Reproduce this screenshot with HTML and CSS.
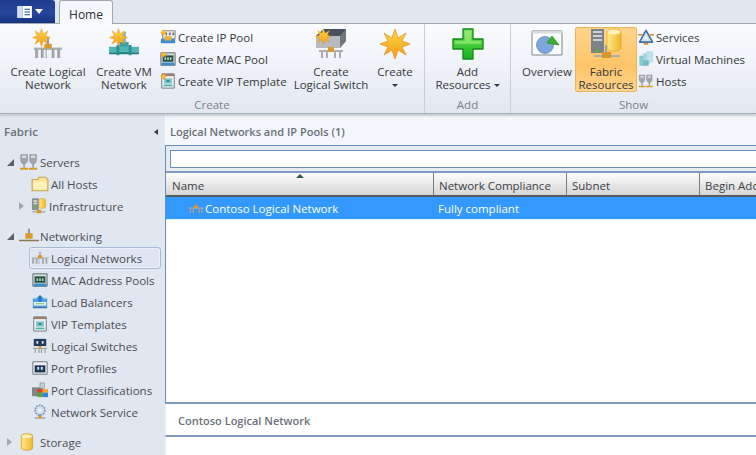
FILE: index.html
```html
<!DOCTYPE html>
<html lang="en">
<head>
<meta charset="utf-8">
<title>Fabric</title>
<link rel="stylesheet" href="styles.css">
</head>
<body>
<svg class="defs" width="0" height="0" aria-hidden="true">
  <defs>
    <linearGradient id="sun" x1="0" y1="0" x2="0" y2="1"><stop offset="0" stop-color="#ffd84a"/><stop offset="1" stop-color="#f59a16"/></linearGradient>
    <linearGradient id="cylfill" x1="0" y1="0" x2="1" y2="0"><stop offset="0" stop-color="#ffe88a"/><stop offset="1" stop-color="#f0b82c"/></linearGradient>
    <linearGradient id="grn" x1="0" y1="0" x2="0" y2="1"><stop offset="0" stop-color="#7fe85a"/><stop offset="1" stop-color="#12b01c"/></linearGradient>
    <symbol id="star" viewBox="0 0 32 32"><polygon points="16,1 19,10 27,5 23,13 31,16 23,19 27,27 19,22 16,31 13,22 5,27 9,19 1,16 9,13 5,5 13,10" fill="url(#sun)" stroke="#e8941a" stroke-width=".8"/></symbol>
    <symbol id="net" viewBox="0 0 32 22"><path d="M15 0h2v8h-2z" fill="#8a8f95"/><path d="M1 10h30v2.500H1z" fill="#a9adb0"/><path d="M3 12h2.500v9H3zM9 12h2.500v9H9zM20.500 12H23v9h-2.500zM26.500 12H29v9h-2.500z" fill="#a9adb0"/><path d="M3 12v9M9 12v9M14 12v9h1M20.500 12v9M26.500 12v9" stroke="#6e7276" fill="none" stroke-width=".7"/><path d="M12 6h8v5h-8z" fill="#d99a2a"/></symbol>
    <symbol id="pipe" viewBox="0 0 32 32"><path d="M14 4h4v12h-4z" fill="#7dbcc0"/><path d="M11 15h10v12H11z" fill="#3aa3a5"/><path d="M0 20h32v6H0z" fill="#4fb6b4"/><path d="M0 26h32v2H0z" fill="#1f7a7c"/><path d="M8 18h3v11H8zM21 18h3v11h-3z" fill="#2a8f92"/></symbol>
    <symbol id="pool" viewBox="0 0 18 18"><path d="M3 2h14v9H3z" fill="#eef1f4" stroke="#75797d"/><path d="M6 4h2v3H6zM10 4h2v3h-2zM14 4h2v3h-2z" fill="#6a7078"/><path d="M1 11h16v5H1z" fill="#3c8ed8"/><path d="M5 8h8v5H5z" fill="#e6ae3a"/></symbol>
    <symbol id="mac" viewBox="0 0 18 18"><path d="M1 2h16v14H1z" fill="#cfd5da" stroke="#5c6268"/><path d="M3 5h12v7H3z" fill="#1d4f3d"/><path d="M5 7h2v3H5zM8 7h2v3H8zM11 7h2v3h-2z" fill="#b5c7b5"/><path d="M2 13h14v3H2z" fill="#3a8fd0"/></symbol>
    <symbol id="lb" viewBox="0 0 18 18"><path d="M1 5h16v9H1z" fill="#4aa3e0"/><path d="M2 9h14v4H2z" fill="#e8f2fa"/><path d="M9 1l4 4h-2.500v4h-3V5H5z" fill="#1e76c4"/><path d="M4 10.500h10v1H4z" fill="#6fb04f"/><path d="M1 14h16v2H1z" fill="#2d78b8"/></symbol>
    <symbol id="vip" viewBox="0 0 18 18"><path d="M2 1h14v16H2z" fill="#f1f2f3" stroke="#6b6f74"/><path d="M2 1h14v2.500H2z" fill="#9d7f72"/><path d="M4.500 6h9v6h-9z" fill="#7fc7c7"/><path d="M7.500 8h3v2h-3z" fill="#1d7f82"/><path d="M4 13h10v2H4z" fill="#4fb6b4"/></symbol>
    <symbol id="sw" viewBox="0 0 18 18"><path d="M2 1h14v8H2z" fill="#223a5a"/><path d="M5 3.500h2v3H5zM11 3.500h2v3h-2z" fill="#e6edf5"/><path d="M1 11h16v1.500H1zM3 12h1.500v5H3zM7 12h1.500v5H7zM10 12h1.500v5H10zM14 12h1.500v5H14z" fill="#a2a6a9"/><path d="M7.500 9h3v2.500h-3z" fill="#d99a2a"/></symbol>
    <symbol id="prof" viewBox="0 0 18 18"><path d="M1 2h16v14H1z" fill="#eef0f2" stroke="#666b70"/><path d="M3 6h12v8H3z" fill="#223a5a"/><path d="M6 8h2v3H6zM10 8h2v3h-2z" fill="#e6edf5"/></symbol>
    <symbol id="cls" viewBox="0 0 18 18"><path d="M0 6h12v10H0z" fill="#82868a"/><path d="M9 1h5v6H9z" fill="#c2d0dc" stroke="#7c8894" stroke-width=".7"/><path d="M6 8h6v4H6z" fill="#e23b2c"/><path d="M12 8h6v4h-6z" fill="#f2a71c"/><path d="M6 12h6v5H6z" fill="#56a83a"/><path d="M12 12h6v5h-6z" fill="#2f86d8"/></symbol>
    <symbol id="svc" viewBox="0 0 18 18"><circle cx="9" cy="7" r="5.500" fill="#cfe0ee" stroke="#8a9db0" stroke-width="2" stroke-dasharray="2 1"/><circle cx="9" cy="7" r="2" fill="#f4f7fa"/><path d="M8 12h2v3H8z" fill="#8a8f95"/><path d="M3 15h12v1.500H3z" fill="#9a9ea2"/><path d="M7 13.500h4v2.500H7z" fill="#d99a2a"/></symbol>
    <symbol id="cylinder" viewBox="0 0 16 22"><path d="M1 4c0-4 14-4 14 0v14c0 4-14 4-14 0z" fill="url(#cylfill)" stroke="#d99a1c"/><ellipse cx="8" cy="4" rx="6" ry="2.200" fill="#fff2b8"/></symbol>
    <symbol id="hosts" viewBox="0 0 24 22"><path d="M2 2h8v8l-2 3h-4l-2-3zM13 2h8v8l-2 3h-4l-2-3z" fill="#a3a8ac" stroke="#7b8084" stroke-width=".7"/><path d="M3.500 3h5v3h-5zM14.500 3h5v3h-5z" fill="#d8dcdf"/><path d="M5 13h2v5H5zM16 13h2v5h-2z" fill="#9a9ea2"/><path d="M1 18h10v2.500H1zM12 18h10v2.500H12z" fill="#d99a2a"/></symbol>
    <symbol id="infra" viewBox="0 0 22 22"><path d="M2 1h8v15H2z" fill="#8d9298" stroke="#5e6368" stroke-width=".7"/><path d="M3.500 3h5v2h-5zM3.500 6.500h5v2h-5z" fill="#dfe2e5"/><circle cx="5" cy="13" r="1.200" fill="#46c22c"/><path d="M11 3c0-3 9-3 9 0v9c0 3-9 3-9 0z" fill="url(#cylfill)" stroke="#d99a1c" stroke-width=".7"/><path d="M2 18h18v2H2z" fill="#a9adb0"/><path d="M8 16h6v5H8z" fill="#d99a2a"/></symbol>
    <symbol id="vm" viewBox="0 0 22 24"><path d="M1 7h9v15H1z" fill="#8ccad2"/><path d="M7 4h9v15H7z" fill="#a7d8de" stroke="#86c0c8" stroke-width=".6"/><path d="M12 1h9v15h-9z" fill="#bfe3e8" stroke="#94cad2" stroke-width=".6"/><path d="M7 14h8v8H7z" fill="#78bcc6"/></symbol>
    <symbol id="services" viewBox="0 0 22 22"><path d="M11 2L20 18H2z" fill="#cfe3f5" stroke="#3e6ea8" stroke-width="2.200" stroke-linejoin="round"/><path d="M11 9l3 5H8z" fill="#fff"/><path d="M0 7h6v1.800H0zM16 7h6v1.800h-6zM8 19h6v2.500H8z" fill="#d9892a"/></symbol>
    <symbol id="nwing" viewBox="0 0 22 18"><path d="M10 1h2v9h-2z" fill="#8a8f95"/><path d="M7 6h8v6H7z" fill="#d99a2a"/><path d="M0 13h22v1.800H0z" fill="#8d7a55"/></symbol>
  </defs>
</svg>

<header class="titlebar">
  <button class="filebtn" type="button" aria-label="File menu">
    <svg class="fileicon" viewBox="0 0 16 13"><path d="M0 0h6v13H0z" fill="#cfe0f5"/><path d="M6 0h10v13H6z" fill="#fff"/><path d="M8 3h6v1H8zM8 6h6v1H8zM8 9h6v1H8z" fill="#1d4f9c"/></svg>
    <span class="filearrow"></span>
  </button>
  <div class="tab">Home</div>
</header>

<section class="ribbon">
  <div class="group group-create">
    <div class="group-items">
      <div class="big w-cln">
        <span class="bigicon"><svg class="ic-stacked" viewBox="0 0 32 32"><use href="#star" x="0" y="0" width="19" height="19"/><use href="#net" x="1" y="10" width="30" height="21"/></svg></span>
        <span class="biglabel">Create Logical<br>Network</span>
      </div>
      <div class="big w-cvm">
        <span class="bigicon"><svg class="ic-stacked" viewBox="0 0 32 32"><use href="#pipe" x="0" y="0" width="32" height="30"/><use href="#star" x="1" y="0" width="19" height="19"/></svg></span>
        <span class="biglabel">Create VM<br>Network</span>
      </div>
      <ul class="smalls">
        <li><svg class="sic" viewBox="0 0 18 18"><use href="#pool" width="18" height="18"/><use href="#star" width="8" height="8"/></svg>Create IP Pool</li>
        <li><svg class="sic" viewBox="0 0 18 18"><use href="#mac" width="18" height="18"/><use href="#star" width="8" height="8"/></svg>Create MAC Pool</li>
        <li><svg class="sic" viewBox="0 0 18 18"><use href="#vip" width="18" height="18"/><use href="#star" width="8" height="8"/></svg>Create VIP Template</li>
      </ul>
      <div class="big w-cls">
        <span class="bigicon"><svg class="ic-stacked" viewBox="0 0 32 32"><path d="M1 8L9 1h22v12l-6 7H1z" fill="#8f959b"/><path d="M1 8h24v12H1z" fill="#b7bbc0"/><path d="M25 8l6-7v12l-6 7z" fill="#70767c"/><path d="M9 1h22l-6 7H1z" fill="#47525e"/><use href="#star" x="0" y="0" width="17" height="17"/><path d="M4 22h24v2H4zM6 23h2v7H6zM11 23h2v7h-2zM19 23h2v7h-2zM24 23h2v7h-2z" fill="#a9adb0"/><path d="M13 19h6v5h-6z" fill="#d99a2a"/></svg></span>
        <span class="biglabel">Create<br>Logical Switch</span>
      </div>
      <div class="big w-cr">
        <span class="bigicon"><svg class="ic-stacked" viewBox="0 0 32 32"><use href="#star" width="32" height="32"/></svg></span>
        <span class="biglabel">Create<br><i class="caret"></i></span>
      </div>
    </div>
    <div class="group-name">Create</div>
  </div>
  <div class="group group-add">
    <div class="group-items">
      <div class="big w-add">
        <span class="bigicon"><svg class="ic-stacked" viewBox="0 0 32 32"><path d="M11 1h10v10h10v10H21v10H11V21H1V11h10z" fill="url(#grn)" stroke="#0c8a16" stroke-width="1.300" stroke-linejoin="round"/><path d="M13 3h6v10h10v3H3v-3h10z" fill="#a6f08a" opacity=".55"/></svg></span>
        <span class="biglabel">Add<br>Resources <i class="caret"></i></span>
      </div>
    </div>
    <div class="group-name">Add</div>
  </div>
  <div class="group group-show">
    <div class="group-items">
      <div class="big w-ov">
        <span class="bigicon"><svg class="ic-stacked" viewBox="0 0 32 32"><path d="M1 3h30v24H1z" fill="#fbfcfd" stroke="#7f8489"/><path d="M1 3h30v2.500H1z" fill="#d9dcdf"/><circle cx="14" cy="17" r="8.500" fill="#7fa6dc" stroke="#5c80b4" stroke-width=".7"/><path d="M16 15l5-7 7 9z" fill="#3bb22a" stroke="#1f8a1a" stroke-width=".7"/></svg></span>
        <span class="biglabel">Overview</span>
      </div>
      <div class="big w-fr active">
        <span class="bigicon"><svg class="ic-fabric" viewBox="0 0 34 32"><path d="M2 1h13v24H2z" fill="#7d8288"/><path d="M4 3h9v2H4zM4 7h9v2H4zM4 11h9v2H4z" fill="#cdd0d3"/><circle cx="8" cy="23" r="1.500" fill="#46c22c"/><path d="M18 4c0-4 14-4 14 0v16c0 4-14 4-14 0z" fill="url(#cylfill)" stroke="#e3a52a" stroke-width=".7"/><ellipse cx="25" cy="4" rx="6.500" ry="2.400" fill="#fff2b8"/><path d="M5 27h26v2H5z" fill="#a9adb0"/><path d="M16 17h2v8h-2z" fill="#9b9fa3"/><path d="M13 24h9v6h-9z" fill="#d6962a"/></svg></span>
        <span class="biglabel">Fabric<br>Resources</span>
      </div>
      <ul class="smalls smalls-show">
        <li><svg class="sic" viewBox="0 0 22 22"><use href="#services" width="22" height="22"/></svg>Services</li>
        <li><svg class="sic" viewBox="0 0 22 24"><use href="#vm" width="22" height="24"/></svg>Virtual Machines</li>
        <li><svg class="sic" viewBox="0 0 24 22"><use href="#hosts" width="24" height="22"/></svg>Hosts</li>
      </ul>
    </div>
    <div class="group-name">Show</div>
  </div>
</section>

<div class="workspace">
  <aside class="sidebar">
    <div class="side-head"><span>Fabric</span><i class="collapse"></i></div>
    <ul class="tree">
      <li class="node top"><i class="exp open"></i><svg class="tic wide" viewBox="0 0 24 22"><use href="#hosts" width="24" height="22"/></svg>Servers</li>
      <li class="node l2"><svg class="tic" viewBox="0 0 16 14"><path d="M1 3h5l1-2h6l2 2v10H1z" fill="#fbe596" stroke="#c9a84e"/><path d="M2 5h12v7H2z" fill="#fdf0bb"/></svg>All Hosts</li>
      <li class="node l1b"><i class="exp closed"></i><svg class="tic" viewBox="0 0 22 22"><use href="#infra" width="22" height="22"/></svg>Infrastructure</li>
      <li class="node top gap"><i class="exp open"></i><svg class="tic wide" viewBox="0 0 22 18"><use href="#nwing" width="22" height="18"/></svg>Networking</li>
      <li class="node l2 sel"><svg class="tic" viewBox="0 0 32 22"><use href="#net" width="32" height="22"/></svg>Logical Networks</li>
      <li class="node l2"><svg class="tic" viewBox="0 0 18 18"><use href="#mac" width="18" height="18"/></svg>MAC Address Pools</li>
      <li class="node l2"><svg class="tic" viewBox="0 0 18 18"><use href="#lb" width="18" height="18"/></svg>Load Balancers</li>
      <li class="node l2"><svg class="tic" viewBox="0 0 18 18"><use href="#vip" width="18" height="18"/></svg>VIP Templates</li>
      <li class="node l2"><svg class="tic" viewBox="0 0 18 18"><use href="#sw" width="18" height="18"/></svg>Logical Switches</li>
      <li class="node l2"><svg class="tic" viewBox="0 0 18 18"><use href="#prof" width="18" height="18"/></svg>Port Profiles</li>
      <li class="node l2"><svg class="tic" viewBox="0 0 18 18"><use href="#cls" width="18" height="18"/></svg>Port Classifications</li>
      <li class="node l2"><svg class="tic" viewBox="0 0 18 18"><use href="#svc" width="18" height="18"/></svg>Network Service</li>
      <li class="node top gap"><i class="exp closed"></i><svg class="tic wide cyl" viewBox="0 0 16 22"><use href="#cylinder" width="16" height="22"/></svg>Storage</li>
    </ul>
  </aside>
  <main class="content">
    <div class="pane-title">Logical Networks and IP Pools (1)</div>
    <div class="grid-pane">
      <div class="filter"><div class="filter-input"></div></div>
      <div class="grid-head">
        <div class="col c-name">Name<i class="sort"></i></div>
        <div class="col c-comp">Network Compliance</div>
        <div class="col c-sub">Subnet</div>
        <div class="col c-beg">Begin Address</div>
      </div>
      <div class="grid-row">
        <div class="cell c-name rowname"><svg class="ric" viewBox="0 0 32 22"><use href="#net" width="32" height="22"/></svg>Contoso Logical Network</div>
        <div class="cell c-comp">Fully compliant</div>
      </div>
    </div>
    <div class="detail">Contoso Logical Network</div>
  </main>
</div>
</body>
</html>
```

FILE: styles.css
```css
* { box-sizing: border-box; }
html, body { margin: 0; padding: 0; }
body {
  width: 756px;
  height: 455px;
  overflow: hidden;
  background: #e1e7f0;
  font-family: "Open Sans", "Noto Sans", "Liberation Sans", sans-serif;
  font-size: 11.5px;
  color: #3c3f44;
  display: flex;
  flex-direction: column;
}
.defs { position: absolute; }
ul { list-style: none; margin: 0; padding: 0; }
i { display: inline-block; font-style: normal; }

/* title bar */
.titlebar {
  height: 24px;
  flex: none;
  display: flex;
  align-items: flex-end;
  background: #e0e7f1;
  border-bottom: 1px solid #a2a8b0;
}
.filebtn {
  width: 55px;
  height: 23px;
  margin: 0 4px 0 0;
  padding: 0 0 0 17px;
  border: 0;
  border-radius: 0 3px 0 0;
  background: linear-gradient(#1e3a8a, #27479c 55%, #17337f);
  display: flex;
  align-items: center;
  gap: 3px;
}
.fileicon { width: 15px; height: 12px; }
.filearrow { width: 0; height: 0; border: 4px solid transparent; border-top: 5px solid #fff; border-bottom: 0; }
.tab {
  width: 54px;
  height: 24px;
  margin-bottom: -1px;
  padding-top: 5px;
  text-align: center;
  font-size: 12px;
  color: #2c2f33;
  background: linear-gradient(#f4f7fb, #f8fafd);
  border: 1px solid #a2a8b0;
  border-bottom: 0;
  border-radius: 3px 3px 0 0;
}

/* ribbon */
.ribbon {
  height: 90px;
  flex: none;
  display: flex;
  background: linear-gradient(#fafbfd, #e2e8f1);
  border-bottom: 1px solid #a5abb3;
  box-shadow: 0 2px 2px #c6ccd4;
  position: relative;
}
.group { display: flex; flex-direction: column; border-right: 1px solid #c8cfd8; }
.group-create { width: 425px; }
.group-add { width: 86px; }
.group-show { flex: 1; border-right: 0; }
.group-items { height: 74px; display: flex; padding-top: 3px; }
.group-name { text-align: center; color: #7b8188; line-height: 14px; font-size: 11.5px; }
.big { display: flex; flex-direction: column; align-items: center; flex: none; line-height: 13px; text-align: center; white-space: nowrap; border: 1px solid transparent; border-radius: 2px; }
.bigicon { height: 35px; display: block; }
.biglabel { display: block; padding-top: 2px; color: #35383c; }
.ic-stacked { width: 32px; height: 32px; display: block; }
.ic-fabric { width: 34px; height: 32px; display: block; }
.w-cln { width: 86px; margin-left: 5px; }
.w-cvm { width: 62px; margin-left: 2px; }
.w-cls { width: 82px; margin-left: 3px; }
.w-cr { width: 46px; margin-left: 0; }
.w-add { width: 85px; }
.w-ov { width: 52px; margin-left: 10px; }
.w-fr { width: 62px; margin-left: 2px; }
.active {
  background: linear-gradient(#ffd58a, #ffc468 60%, #ffd48c);
  border-color: #e6b561;
  height: 65px;
}
.smalls { display: flex; flex-direction: column; margin: -1px 0 0 5px; width: 127px; }
.smalls-show { margin-left: 1px; width: 118px; }
.smalls li { height: 22px; display: flex; align-items: center; gap: 2px; white-space: nowrap; color: #35383c; }
.sic { width: 16px; height: 16px; flex: none; }
.caret { width: 0; height: 0; border: 3px solid transparent; border-top: 3px solid #35383c; border-bottom: 0; vertical-align: 2px; }

/* workspace */
.workspace { flex: 1; display: flex; min-height: 0; }
.sidebar { width: 165px; flex: none; background: #e1e7f0; }
.side-head {
  height: 31px;
  padding: 4px 7px 0 4px;
  display: flex;
  align-items: center;
  justify-content: space-between;
  font-weight: 600;
  color: #6a6f7a;
}
.collapse { width: 0; height: 0; border: 3.500px solid transparent; border-right: 4px solid #3a3d42; border-left: 0; }
.tree { padding-top: 6px; }
.node { height: 22px; display: flex; align-items: center; white-space: nowrap; color: #4a4d52; border: 1px solid transparent; }
.top { padding-left: 6px; }
.gap { margin-top: 8px; }
.l2 { margin-left: 29px; width: 132px; padding-left: 1px; gap: 2px; }
.l1b { padding-left: 18px; }
.tic { width: 18px; height: 16px; flex: none; margin-right: 2px; }
.l1b .tic { margin-left: 1px; margin-right: 1px; }
.tic.wide { width: 20px; height: 18px; margin-right: 1px; }
.tic.cyl { margin-right: 3px; }
.l2 .tic { margin-right: 0; }
.sel { background: #dfe6f1; border: 1px solid #a9bbd1; border-radius: 3px; height: 22px; box-shadow: inset 0 0 0 1px #eef2f8; }
.exp.open { border-style: solid; border-width: 0 0 7px 7px; border-color: transparent transparent #5c5f64 transparent; width: 0; height: 0; margin-right: 5px; flex: none; }
.exp.closed { width: 0; height: 0; border-style: solid; border-width: 4px 0 4px 5px; border-color: transparent transparent transparent #a4a8ae; margin-right: 5px; flex: none; }

/* content */
.content { flex: 1; min-width: 0; display: flex; flex-direction: column; }
.pane-title {
  height: 31px;
  padding: 3px 0 0 4px;
  display: flex;
  align-items: center;
  background: #f3f6fb;
  border-left: 1px solid #f8fafd;
  font-weight: 600;
  font-size: 11px;
  color: #6a6f7a;
}
.grid-pane { height: 259px; flex: none; background: #fff; border-top: 1px solid #6d8db3; border-left: 1px solid #6d8db3; border-bottom: 2px solid #7f9abd; overflow: hidden; }
.filter { height: 27px; padding: 4px 0 4px 4px; background: #e6eaf1; border-bottom: 2px solid #7f9abd; }
.filter-input { height: 18px; background: #fff; border: 1px solid #6d8db3; border-right: 0; }
.grid-head { height: 24px; display: flex; background: linear-gradient(#fdfdfd, #e9e9e9 50%, #d5d5d5); border-bottom: 2px solid #555a60; }
.col { flex: none; padding: 5px 0 0 6px; color: #3c3f44; border-right: 1px solid #7a7e83; white-space: nowrap; overflow: hidden; position: relative; line-height: 15px; }
.c-name { width: 268px; }
.c-comp { width: 133px; }
.c-sub { width: 133px; }
.c-beg { width: 70px; border-right: 0; }
.col.c-comp, .col.c-sub, .col.c-beg { padding-left: 5px; }
.sort { position: absolute; top: 1px; left: 130px; width: 0; height: 0; border: 4px solid transparent; border-bottom: 4px solid #2f5a58; border-top: 0; }
.grid-row { height: 23px; display: flex; background: #3399ff; color: #fff; align-items: center; border-bottom: 1px solid #e9f2fb; }
.cell { flex: none; padding-left: 4px; white-space: nowrap; display: flex; align-items: center; }
.rowname { padding-left: 22px; }
.ric { width: 16px; height: 12px; margin-right: 1px; flex: none; }
.detail {
  height: 33px;
  flex: none;
  padding: 1px 0 0 12px;
  display: flex;
  align-items: center;
  background: #fff;
  border-left: 1px solid #e9edf3;
  border-bottom: 2px solid #7f9abd;
  font-weight: 600;
  font-size: 11px;
  color: #6a6f7a;
}
.content::after { content: ""; flex: 1; background: #fff; border-left: 1px solid #e9edf3; }
```
